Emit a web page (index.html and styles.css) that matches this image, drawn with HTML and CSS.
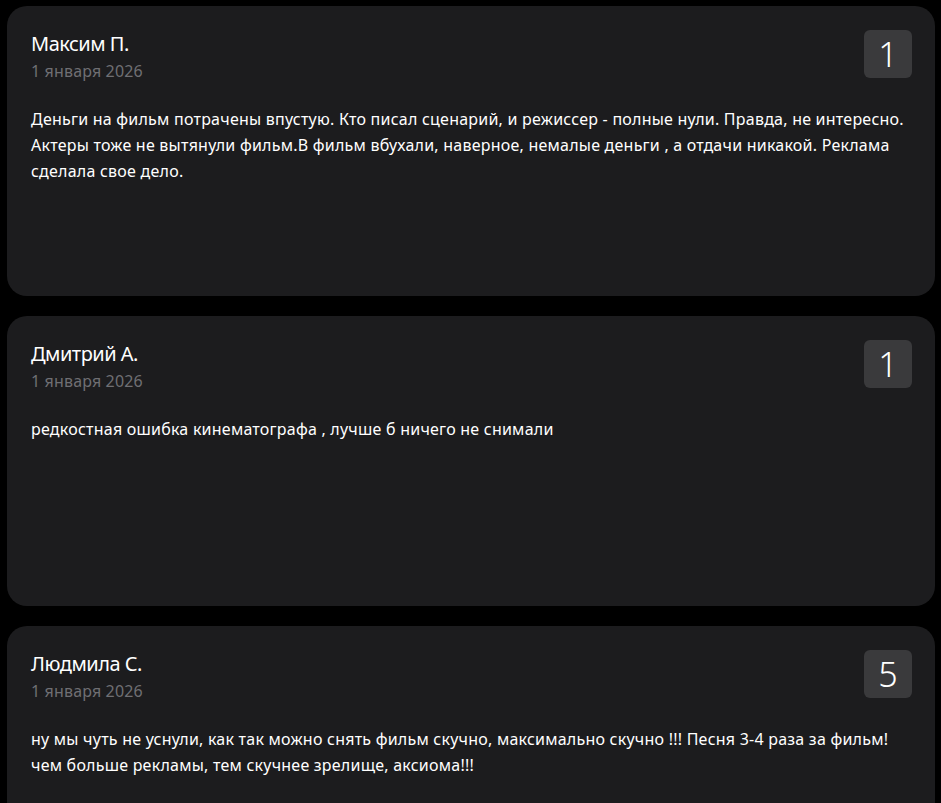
FILE: index.html
```html
<!DOCTYPE html>
<html lang="ru">
<head>
  <meta charset="UTF-8" />
  <meta name="viewport" content="width=device-width, initial-scale=1.0"/>
  <title>Отзывы</title>
  <link rel="stylesheet" href="styles.css">
</head>
<body>
  <div class="reviews">
    <div class="review">
      <div class="review-head">
        <div class="review-author">
          <div class="review-name">Максим П.</div>
          <div class="review-date">1 января 2026</div>
        </div>
        <div class="review-score">1</div>
      </div>
      <p class="review-text">Деньги на фильм потрачены впустую. Кто писал сценарий, и режиссер - полные нули. Правда, не интересно. Актеры тоже не вытянули фильм.В фильм вбухали, наверное, немалые деньги , а отдачи никакой. Реклама сделала свое дело.</p>
    </div>

    <div class="review">
      <div class="review-head">
        <div class="review-author">
          <div class="review-name">Дмитрий А.</div>
          <div class="review-date">1 января 2026</div>
        </div>
        <div class="review-score">1</div>
      </div>
      <p class="review-text">редкостная ошибка кинематографа , лучше б ничего не снимали</p>
    </div>

    <div class="review">
      <div class="review-head">
        <div class="review-author">
          <div class="review-name">Людмила С.</div>
          <div class="review-date">1 января 2026</div>
        </div>
        <div class="review-score">5</div>
      </div>
      <p class="review-text">ну мы чуть не уснули, как так можно снять фильм скучно, максимально скучно !!! Песня 3-4 раза за фильм! чем больше рекламы, тем скучнее зрелище, аксиома!!!</p>
    </div>
  </div>
</body>
</html>
```
FILE: styles.css
```css
body {
  margin: 0;
  background: #000;
  color: #fff;
  font-family: 'Noto Sans', 'Open Sans', sans-serif;
}

.reviews {
  display: flex;
  flex-direction: column;
  gap: 20px;
  padding: 6px 6px 20px 7px;
}

.review {
  background: #1c1c1e;
  border-radius: 20px;
  padding: 24px 23px 24px 24px;
  min-height: 290px;
  box-sizing: border-box;
}

.review-head {
  display: flex;
  justify-content: space-between;
  align-items: flex-start;
}

.review-name {
  font-size: 20px;
  line-height: 28px;
  letter-spacing: -0.5px;
}

.review-date {
  font-size: 16px;
  line-height: 24px;
  color: #6f6f73;
  margin-top: 1px;
  letter-spacing: 0.15px;
}

.review-score {
  width: 48px;
  height: 48px;
  border-radius: 6px;
  background: #3a3a3c;
  display: flex;
  align-items: center;
  justify-content: center;
  font-size: 34px;
  font-weight: 300;
  line-height: 1;
}

.review-text {
  margin: 23px 0 0;
  font-size: 16px;
  line-height: 26px;
  letter-spacing: 0.23px;
}
```
